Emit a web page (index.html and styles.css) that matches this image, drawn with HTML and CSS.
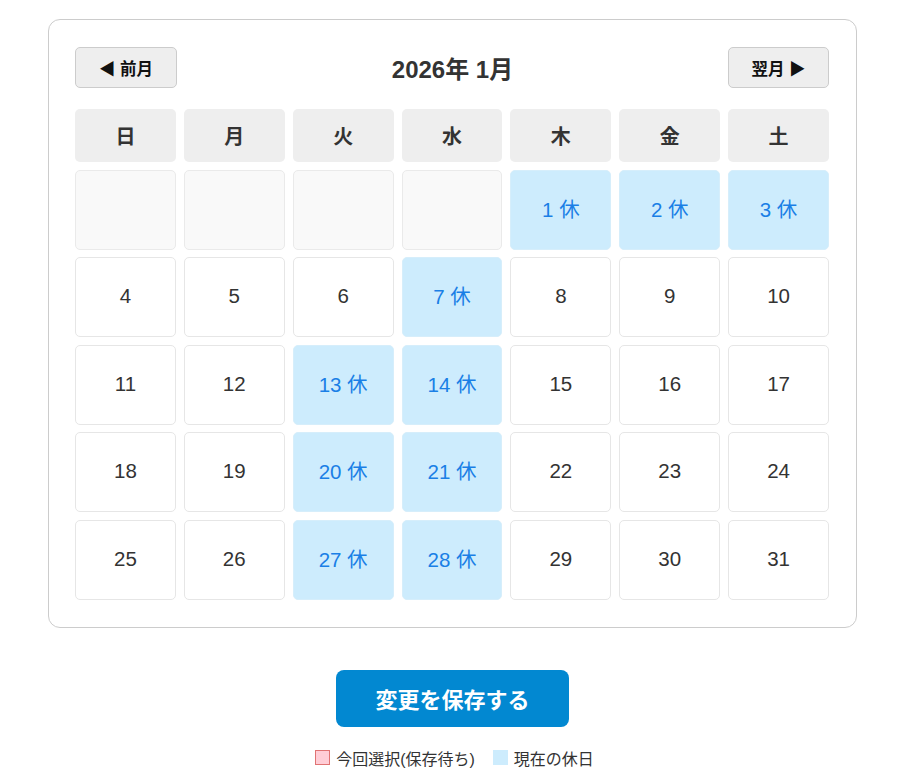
FILE: index.html
```html
<!DOCTYPE html>
<html lang="ja">
<head>
<meta charset="utf-8">
<link rel="stylesheet" href="styles.css">
</head>
<body>
<div class="calendar">
  <div class="cal-header">
    <button class="nav-btn prev">◀ 前月</button>
    <div class="title">2026年 1月</div>
    <button class="nav-btn next">翌月 ▶</button>
  </div>
  <div class="grid">
    <div class="wd">日</div><div class="wd">月</div><div class="wd">火</div><div class="wd">水</div><div class="wd">木</div><div class="wd">金</div><div class="wd">土</div>
    <div class="day empty"></div><div class="day empty"></div><div class="day empty"></div><div class="day empty"></div>
    <div class="day hol">1 休</div><div class="day hol">2 休</div><div class="day hol">3 休</div>
    <div class="day">4</div><div class="day">5</div><div class="day">6</div><div class="day hol">7 休</div><div class="day">8</div><div class="day">9</div><div class="day">10</div>
    <div class="day">11</div><div class="day">12</div><div class="day hol">13 休</div><div class="day hol">14 休</div><div class="day">15</div><div class="day">16</div><div class="day">17</div>
    <div class="day">18</div><div class="day">19</div><div class="day hol">20 休</div><div class="day hol">21 休</div><div class="day">22</div><div class="day">23</div><div class="day">24</div>
    <div class="day">25</div><div class="day">26</div><div class="day hol">27 休</div><div class="day hol">28 休</div><div class="day">29</div><div class="day">30</div><div class="day">31</div>
  </div>
</div>
<div class="actions">
  <button class="save-btn">変更を保存する</button>
</div>
<div class="legend">
  <span class="item"><span class="sw sw-pending"></span>今回選択(保存待ち)</span>
  <span class="item"><span class="sw sw-hol"></span>現在の休日</span>
</div>
</body>
</html>
```
FILE: styles.css
```css
* { box-sizing: border-box; }
body {
  margin: 0;
  background: #fff;
  color: #333;
  font-family: "Liberation Sans", "Noto Sans CJK JP", sans-serif;
}
.calendar {
  width: 809px;
  margin: 19px 0 0 48px;
  border: 1px solid #ccc;
  border-radius: 12px;
  padding: 27px 27px 27px 26px;
}
.cal-header {
  display: flex;
  align-items: center;
  justify-content: space-between;
  height: 41px;
  margin-bottom: 21px;
}
.nav-btn {
  height: 41px;
  background: #eee;
  border: 1px solid #ccc;
  border-radius: 5px;
  font-family: inherit;
  font-weight: bold;
  font-size: 16.5px;
  color: #111;
  padding: 0;
}
.nav-btn.prev { width: 102px; }
.nav-btn.next { width: 101px; }
.title {
  font-size: 24px;
  font-weight: bold;
  color: #333;
}
.grid {
  display: grid;
  grid-template-columns: repeat(7, 1fr);
  grid-template-rows: 53px repeat(5, 80px);
  gap: 7.5px 8px;
}
.wd {
  background: #eee;
  border-radius: 5px;
  display: flex;
  align-items: center;
  justify-content: center;
  font-weight: bold;
  font-size: 20px;
  color: #333;
}
.day {
  border: 1px solid #e6e6e6;
  border-radius: 5px;
  background: #fff;
  display: flex;
  align-items: center;
  justify-content: center;
  font-size: 20.5px;
  color: #333;
  padding-bottom: 2px;
}
.day.empty { background: #f9f9f9; border-color: #eaeaea; }
.day.hol { background: #cdecfd; border-color: #d6eefb; color: #1a7fe6; padding-bottom: 4px; }
.actions {
  display: flex;
  justify-content: center;
  margin-top: 42px;
}
.save-btn {
  width: 233px;
  height: 57px;
  background: #0288d1;
  color: #fff;
  border: none;
  border-radius: 8px;
  font-family: inherit;
  font-weight: bold;
  font-size: 22px;
  margin-right: 4px;
}
.legend {
  display: flex;
  justify-content: center;
  gap: 18px;
  margin-top: 19px;
  font-size: 16px;
  color: #333;
}
.item { display: inline-flex; align-items: center; gap: 6px; }
.sw { display: inline-block; width: 15px; height: 15px; }
.sw-pending { background: #ffcdd6; border: 1px solid #e07373; }
.sw-hol { background: #cdecfd; }
```
